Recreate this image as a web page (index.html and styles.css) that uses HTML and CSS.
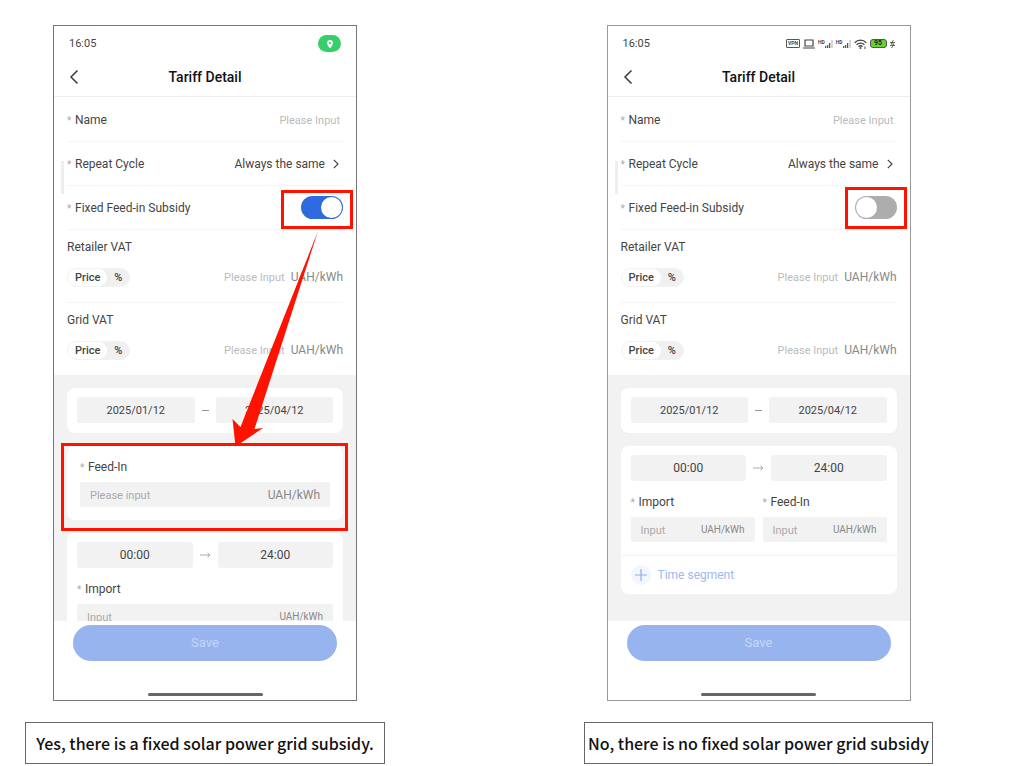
FILE: index.html
```
<!DOCTYPE html>
<html lang="en">
<head>
  <meta charset="UTF-8">
  <meta name="viewport" content="width=device-width, initial-scale=1.0">
  <title>Tariff Detail</title>
  <link rel="stylesheet" href="styles.css">
</head>
<body>
  <main class="comparison">

    <!-- Subsidy switched on -->
    <figure class="example">
      <div class="phone">
        <div class="status-bar">
          <span>16:05</span>
          <span class="location">
            <svg width="8" height="10" viewBox="0 0 8 10"><path fill="#fff" fill-rule="evenodd" d="M4 1a3 3 0 0 0-3 3c0 2.200 3 5.200 3 5.200S7 6.200 7 4a3 3 0 0 0-3-3zm0 2a1.100 1.100 0 1 1 0 2.200A1.100 1.100 0 0 1 4 3z"/></svg>
          </span>
        </div>
        <header class="nav">
          <button class="back" type="button" aria-label="Back">
            <svg width="10" height="16" viewBox="0 0 10 16"><path d="M8.500 1.500 2 8l6.500 6.500" fill="none" stroke="#333b45" stroke-width="1.500"/></svg>
          </button>
          <h1>Tariff Detail</h1>
        </header>

        <form class="content">
          <div class="settings">
            <div class="row">
              <label class="required" for="name1">Name</label>
              <input class="plain-input" type="text" id="name1" placeholder="Please Input">
            </div>
            <div class="row">
              <span class="required">Repeat Cycle</span>
              <button class="picker" type="button">Always the same
                <svg width="6" height="10" viewBox="0 0 6 10"><path d="M.8.8 5 5 .8 9.200" fill="none" stroke="#444" stroke-width="1.200"/></svg>
              </button>
            </div>
            <div class="row">
              <label class="required" for="subsidy1">Fixed Feed-in Subsidy</label>
              <input class="switch" type="checkbox" id="subsidy1" checked>
              <span class="mark mark-on"></span>
            </div>
            <div class="vat">
              <label for="retailer1">Retailer VAT</label>
              <div class="vat-line">
                <div class="segmented">
                  <label><input type="radio" name="retailerUnit1" checked><span>Price</span></label>
                  <label><input type="radio" name="retailerUnit1"><span>%</span></label>
                </div>
                <input class="plain-input" type="text" id="retailer1" placeholder="Please Input">
                <span class="unit">UAH/kWh</span>
              </div>
            </div>
            <div class="vat">
              <label for="grid1">Grid VAT</label>
              <div class="vat-line">
                <div class="segmented">
                  <label><input type="radio" name="gridUnit1" checked><span>Price</span></label>
                  <label><input type="radio" name="gridUnit1"><span>%</span></label>
                </div>
                <input class="plain-input" type="text" id="grid1" placeholder="Please Input">
                <span class="unit">UAH/kWh</span>
              </div>
            </div>
          </div>

          <div class="cards">
            <div class="card">
              <div class="range dates">
                <input type="text" value="2025/01/12" aria-label="Start date">
                <span class="dash"></span>
                <input type="text" value="2025/04/12" aria-label="End date">
              </div>
            </div>
            <div class="card feed-card">
              <div class="field">
                <label class="required" for="feed1">Feed-In</label>
                <div class="box"><input type="text" id="feed1" placeholder="Please input"><span class="unit">UAH/kWh</span></div>
              </div>
            </div>
            <div class="card">
              <div class="range">
                <input type="text" value="00:00" aria-label="Start time">
                <svg class="to" width="11" height="6" viewBox="0 0 11 6"><path d="M0 3h10M7.500.8 10 3 7.500 5.200" fill="none" stroke="#aaa"/></svg>
                <input type="text" value="24:00" aria-label="End time">
              </div>
              <div class="prices">
                <div class="field">
                  <label class="required" for="import1">Import</label>
                  <div class="box small"><input type="text" id="import1" placeholder="Input"><span class="unit">UAH/kWh</span></div>
                </div>
              </div>
            </div>
          </div>
        </form>

        <footer class="bottom">
          <button class="save" type="submit">Save</button>
          <span class="home-bar"></span>
        </footer>

        <span class="mark mark-feed"></span>
        <svg class="arrow" width="90" height="216" viewBox="0 0 90 216"><path fill="#ff1200" d="M88 0 24.500 198l8.500-1L5.500 215.500 2.500 188l8 8z"/></svg>
      </div>
      <figcaption>Yes, there is a fixed solar power grid subsidy.</figcaption>
    </figure>

    <!-- Subsidy switched off -->
    <figure class="example">
      <div class="phone light">
        <div class="status-bar">
          <span>16:05</span>
          <span class="status-icons">
            <span class="vpn">VPN</span>
            <svg width="12" height="10" viewBox="0 0 12 10"><path d="M2 1h8v6H2zM0 9h12" fill="none" stroke="#444" stroke-width="1.200"/></svg>
            <span class="signal"><small>HD</small><svg width="8" height="8" viewBox="0 0 8 8"><path d="M.6 6v2M2.600 5v3M4.600 3v5" stroke="#555" stroke-width="1.300"/><path d="M7 0v8" stroke="#bbb" stroke-width="1.200"/></svg></span>
            <span class="signal"><small>HD</small><svg width="8" height="8" viewBox="0 0 8 8"><path d="M.6 6v2M2.600 5v3M4.600 3v5" stroke="#555" stroke-width="1.300"/><path d="M7 0v8" stroke="#bbb" stroke-width="1.200"/></svg></span>
            <svg width="13" height="10" viewBox="0 0 13 10"><path d="M.7 3.700a8 8 0 0 1 11.600 0M2.600 5.700a5.400 5.400 0 0 1 7.800 0M4.500 7.600a2.800 2.800 0 0 1 4 0" fill="none" stroke="#444" stroke-width="1.300"/><circle cx="6.500" cy="9" r="1" fill="#444"/><path d="M11 7.500v2.500" stroke="#444"/></svg>
            <span class="battery">95</span>
            <svg width="5" height="8" viewBox="0 0 5 8"><path d="M3.500 0 1 4h3L1.500 8M0 2.500h5M0 5.500h5" fill="none" stroke="#444" stroke-width=".8"/></svg>
          </span>
        </div>
        <header class="nav">
          <button class="back" type="button" aria-label="Back">
            <svg width="10" height="16" viewBox="0 0 10 16"><path d="M8.500 1.500 2 8l6.500 6.500" fill="none" stroke="#333b45" stroke-width="1.500"/></svg>
          </button>
          <h1>Tariff Detail</h1>
        </header>

        <form class="content">
          <div class="settings">
            <div class="row">
              <label class="required" for="name2">Name</label>
              <input class="plain-input" type="text" id="name2" placeholder="Please Input">
            </div>
            <div class="row">
              <span class="required">Repeat Cycle</span>
              <button class="picker" type="button">Always the same
                <svg width="6" height="10" viewBox="0 0 6 10"><path d="M.8.8 5 5 .8 9.200" fill="none" stroke="#444" stroke-width="1.200"/></svg>
              </button>
            </div>
            <div class="row">
              <label class="required" for="subsidy2">Fixed Feed-in Subsidy</label>
              <input class="switch" type="checkbox" id="subsidy2">
              <span class="mark mark-off"></span>
            </div>
            <div class="vat">
              <label for="retailer2">Retailer VAT</label>
              <div class="vat-line">
                <div class="segmented">
                  <label><input type="radio" name="retailerUnit2" checked><span>Price</span></label>
                  <label><input type="radio" name="retailerUnit2"><span>%</span></label>
                </div>
                <input class="plain-input" type="text" id="retailer2" placeholder="Please Input">
                <span class="unit">UAH/kWh</span>
              </div>
            </div>
            <div class="vat">
              <label for="grid2">Grid VAT</label>
              <div class="vat-line">
                <div class="segmented">
                  <label><input type="radio" name="gridUnit2" checked><span>Price</span></label>
                  <label><input type="radio" name="gridUnit2"><span>%</span></label>
                </div>
                <input class="plain-input" type="text" id="grid2" placeholder="Please Input">
                <span class="unit">UAH/kWh</span>
              </div>
            </div>
          </div>

          <div class="cards">
            <div class="card">
              <div class="range dates">
                <input type="text" value="2025/01/12" aria-label="Start date">
                <span class="dash"></span>
                <input type="text" value="2025/04/12" aria-label="End date">
              </div>
            </div>
            <div class="card">
              <div class="range">
                <input type="text" value="00:00" aria-label="Start time">
                <svg class="to" width="11" height="6" viewBox="0 0 11 6"><path d="M0 3h10M7.500.8 10 3 7.500 5.200" fill="none" stroke="#aaa"/></svg>
                <input type="text" value="24:00" aria-label="End time">
              </div>
              <div class="prices">
                <div class="field">
                  <label class="required" for="import2">Import</label>
                  <div class="box small"><input type="text" id="import2" placeholder="Input"><span class="unit">UAH/kWh</span></div>
                </div>
                <div class="field">
                  <label class="required" for="feed2">Feed-In</label>
                  <div class="box small"><input type="text" id="feed2" placeholder="Input"><span class="unit">UAH/kWh</span></div>
                </div>
              </div>
              <button class="add" type="button">
                <svg width="20" height="20" viewBox="0 0 20 20"><circle cx="10" cy="10" r="10" fill="#f3f6fd"/><path d="M4 10h12M10 4v12" stroke="#8eaef0" stroke-width="1.200"/></svg>
                Time segment
              </button>
            </div>
          </div>
        </form>

        <footer class="bottom">
          <button class="save" type="submit">Save</button>
          <span class="home-bar"></span>
        </footer>
      </div>
      <figcaption>No, there is no fixed solar power grid subsidy</figcaption>
    </figure>

  </main>
</body>
</html>
```
FILE: styles.css
```
* {
  box-sizing: border-box;
}
body {
  margin: 0;
  background: #fff;
  color: #444;
  font-family: Roboto, "Noto Sans", sans-serif;
  font-size: 12px;
  line-height: 20px;
}
input, button {
  margin: 0;
  padding: 0;
  border: none;
  background: none;
  color: inherit;
  font: inherit;
}
button {
  cursor: pointer;
}
input::placeholder {
  color: #bbb;
  font-size: 11px;
  opacity: 1;
}

/* Two phones side by side */
.comparison {
  display: grid;
  grid-template-columns: minmax(0, 360px) minmax(0, 349px);
  column-gap: 199px;
  padding: 25px 25px 0;
}
.example {
  display: flex;
  flex-direction: column;
  align-items: center;
  gap: 21px;
  margin: 0;
}
figcaption {
  width: 100%;
  padding: 8px 0;
  border: 1px solid #666;
  color: #111;
  font-family: "Noto Sans CJK SC", sans-serif;
  font-size: 16px;
  font-weight: 500;
  line-height: 24px;
  text-align: center;
}
.phone {
  position: relative;
  display: flex;
  flex-direction: column;
  width: 100%;
  max-width: 304px;
  aspect-ratio: 304 / 676;
  border: 1px solid #777;
}
.phone.light {
  border-color: #999;
}

/* Status bar and title */
.status-bar {
  display: flex;
  align-items: center;
  justify-content: space-between;
  height: 35px;
  padding: 0 15px;
  font-size: 11px;
}
.location {
  display: flex;
  align-items: center;
  justify-content: center;
  width: 23px;
  height: 17px;
  border-radius: 9px;
  background: #36cf69;
}
.status-icons {
  display: flex;
  align-items: center;
  gap: 3px;
}
.vpn {
  width: 14px;
  border: 1px solid #555;
  border-radius: 1px;
  font-size: 5px;
  font-weight: 700;
  line-height: 7px;
  text-align: center;
}
.signal {
  display: flex;
  align-items: flex-end;
}
.signal small {
  align-self: flex-start;
  font-size: 5px;
  font-weight: 700;
  line-height: 5px;
}
.battery {
  width: 17px;
  border: 1px solid #555;
  border-radius: 3px;
  background: #62d32f;
  color: #222;
  font-size: 7px;
  font-weight: 700;
  line-height: 7px;
  text-align: center;
}
.nav {
  display: grid;
  grid-template-columns: 10px 1fr 10px;
  align-items: center;
  height: 36px;
  padding: 0 15px 4px;
  border-bottom: 1px solid #eee;
}
.back {
  display: flex;
}
.nav h1 {
  margin: 0;
  color: #111;
  font-size: 14px;
  font-weight: 500;
  text-align: center;
}

/* Form rows */
.content {
  flex: 1;
  display: flex;
  flex-direction: column;
  min-height: 0;
  overflow: hidden;
}
.settings {
  position: relative;
  padding: 1px 13px 0;
}
.settings::before {
  content: "";
  position: absolute;
  left: 7px;
  top: 64px;
  width: 3px;
  height: 33px;
  background: #eee;
}
.row {
  position: relative;
  display: flex;
  align-items: center;
  justify-content: space-between;
  height: 44px;
  border-bottom: 1px solid #f5f5f5;
}
.required::before {
  content: "*";
  display: inline-block;
  width: 8px;
  color: #aaa;
  font-size: 10px;
  line-height: 12px;
}
.plain-input {
  flex: 1;
  min-width: 0;
  text-align: right;
}
.row .plain-input {
  padding-right: 3px;
}
.picker {
  display: flex;
  align-items: center;
  gap: 8px;
  padding-right: 4px;
}
.switch {
  appearance: none;
  width: 42px;
  height: 23px;
  padding: 1px;
  border-radius: 12px;
  background: #adadad;
}
.switch::before {
  content: "";
  display: block;
  width: 21px;
  height: 21px;
  border-radius: 50%;
  background: #fff;
}
.switch:checked {
  background: #2e6be0;
}
.switch:checked::before {
  margin-left: auto;
}
.vat {
  display: flex;
  flex-direction: column;
  gap: 10px;
  padding: 7px 0 15px;
}
.vat + .vat {
  border-top: 1px solid #f5f5f5;
}
.vat-line {
  display: flex;
  align-items: center;
  gap: 6px;
  height: 20px;
}
.segmented {
  display: flex;
  border: 1px solid #f2f2f2;
  border-radius: 10px;
  background: #f0f0f0;
  font-size: 11px;
  font-weight: 500;
  line-height: 17px;
}
.segmented input {
  appearance: none;
  position: absolute;
}
.segmented span {
  display: block;
  padding: 0 7px;
  border-radius: 9px;
}
.segmented :checked + span {
  background: #fff;
}
.unit {
  color: #888;
}

/* Grey area with cards */
.cards {
  flex: 1;
  display: flex;
  flex-direction: column;
  gap: 13px;
  padding: 13px;
  background: #f2f2f2;
}
.card {
  flex: none;
  padding: 9px 10px 10px;
  border-radius: 8px;
  background: #fff;
}
.feed-card {
  padding: 11px 13px 13px;
}
.range {
  display: flex;
  align-items: center;
}
.range input {
  flex: 1;
  min-width: 0;
  height: 26px;
  border-radius: 3px;
  background: #f2f2f2;
  text-align: center;
}
.dates input {
  font-size: 11px;
}
.dash {
  width: 7px;
  height: 1px;
  margin: 0 7px;
  background: #999;
}
.to {
  margin: 0 7px;
}
.prices {
  display: flex;
  gap: 8px;
  padding: 11px 0 3px;
}
.field {
  flex: 1;
  display: flex;
  flex-direction: column;
  gap: 5px;
  min-width: 0;
}
.box {
  display: flex;
  align-items: center;
  height: 25px;
  padding: 0 10px;
  border-radius: 2px;
  background: #f2f2f2;
}
.box input {
  flex: 1;
  min-width: 0;
}
.box input::placeholder {
  color: #aaa;
}
.small .unit {
  font-size: 10px;
}
.add {
  display: flex;
  align-items: center;
  gap: 7px;
  width: calc(100% + 20px);
  margin: 10px -10px -10px;
  padding: 9px 10px;
  border-top: 1px solid #f2f2f2;
  color: #9db8f2;
}

/* Save button */
.bottom {
  display: flex;
  flex-direction: column;
  align-items: center;
  justify-content: space-between;
  height: 79px;
  padding: 4px 19px;
  background: #fff;
}
.save {
  width: 100%;
  height: 36px;
  border-radius: 18px;
  background: #98b4ef;
  color: #c6d6f8;
  font-size: 13px;
}
.home-bar {
  width: 115px;
  height: 3px;
  border-radius: 2px;
  background: #666;
}

/* Red marks drawn over the screen */
.mark {
  position: absolute;
  border: 3px solid #ff1200;
  pointer-events: none;
}
.mark-on {
  top: 4px;
  right: -10px;
  width: 72px;
  height: 39px;
}
.mark-off {
  top: 1px;
  right: -10px;
  width: 62px;
  height: 42px;
}
.mark-feed {
  top: 417px;
  left: 7px;
  width: 287px;
  height: 88px;
}
.arrow {
  position: absolute;
  top: 205px;
  left: 176px;
  pointer-events: none;
}
```
